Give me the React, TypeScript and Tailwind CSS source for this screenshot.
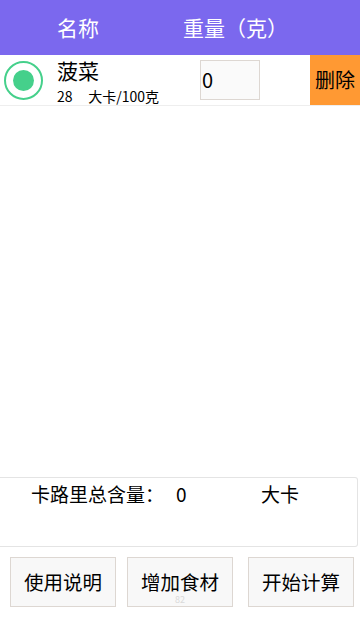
const font = { fontFamily: '"Noto Sans CJK SC", Roboto, sans-serif' };

const App = () => {
  return (
    <div className="w-[360px] h-[640px] bg-white flex flex-col relative" style={font}>
      {/* Header */}
      <div className="h-[55px] bg-[#7b68ee] flex items-center text-white text-[21px] shrink-0">
        <span className="ml-[57px] w-[126px]">名称</span>
        <span>重量（克）</span>
      </div>

      {/* Food row */}
      <div className="h-[51px] flex items-stretch border-b border-[#eeeeee] shrink-0">
        <div className="w-[57px] flex items-center pl-[4px]">
          <div className="w-[39px] h-[39px] rounded-full border-2 border-[#45d08b] flex items-center justify-center">
            <div className="w-[21px] h-[21px] rounded-full bg-[#45d08b]" />
          </div>
        </div>
        <div className="w-[143px] flex flex-col text-black">
          <span className="text-[21px] leading-[26px] mt-[2px]">菠菜</span>
          <span className="text-[14px] leading-[16px] mt-[5px] whitespace-pre">28     大卡/100克</span>
        </div>
        <div className="flex items-center">
          <div className="w-[60px] h-[40px] border border-[#ddd7d2] bg-[#fafafa] flex items-center text-[20px] text-black pl-[1px]">
            0
          </div>
        </div>
        <div className="ml-auto w-[50px] bg-[#ff9933] flex items-center justify-center text-[20px] text-black">
          删除
        </div>
      </div>

      <div className="flex-1" />

      {/* Total */}
      <div className="h-[70px] mr-[2px] border border-l-0 border-[#e4e4e4] rounded-r-[3px] text-[19px] text-black flex items-start pt-[2px] shrink-0">
        <span className="ml-[31px]">卡路里总含量：</span>
        <span className="ml-[12px] w-[85px]">0</span>
        <span>大卡</span>
      </div>

      {/* Buttons */}
      <div className="h-[93px] flex items-start pt-[10px] shrink-0 text-[19.5px] text-black">
        <button className="ml-[10px] w-[106px] h-[50px] border border-[#ddd7d2] bg-[#f8f8f8]">使用说明</button>
        <button className="ml-[11px] w-[106px] h-[50px] border border-[#ddd7d2] bg-[#f8f8f8] relative">
          增加食材
          <span className="absolute left-1/2 top-[37px] -translate-x-1/2 text-[9px] leading-[9px] text-[#dadada]">82</span>
        </button>
        <button className="ml-[15px] w-[106px] h-[50px] border border-[#ddd7d2] bg-[#f8f8f8]">开始计算</button>
      </div>
    </div>
  );
};

export default App;
